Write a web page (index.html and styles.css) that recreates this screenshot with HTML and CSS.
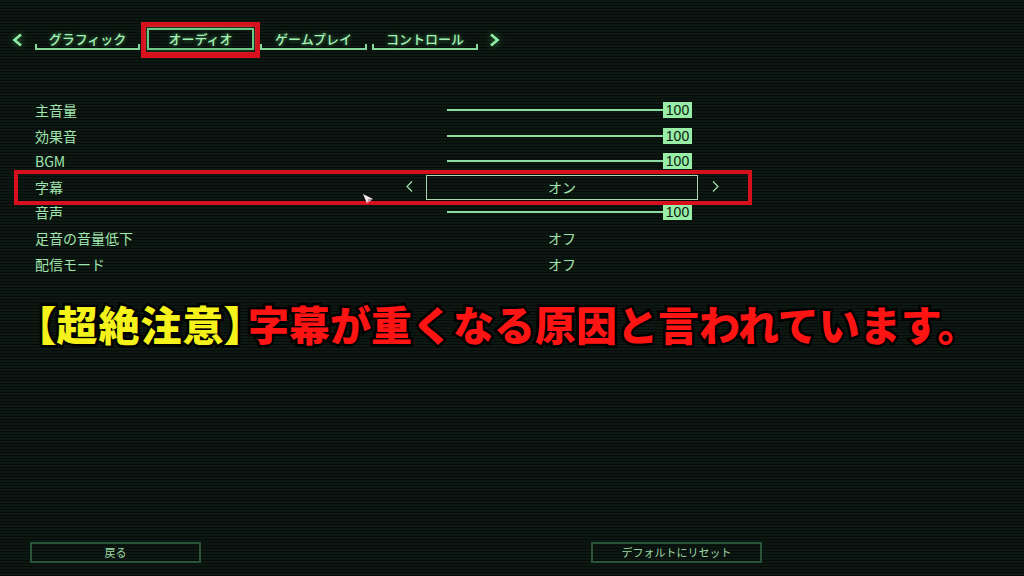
FILE: index.html
```html
<!DOCTYPE html>
<html lang="ja">
<head>
<meta charset="utf-8">
<title>オーディオ設定</title>
<link rel="stylesheet" href="styles.css">
</head>
<body>
<div class="screen">
  <nav class="tabs">
    <svg class="nav-arrow" width="11" height="14" viewBox="0 0 11 14"><polyline points="9,1.5 2.5,7 9,12.5" fill="none" stroke="#8ff0a4" stroke-width="2.6"/></svg>
    <div class="tab">グラフィック</div>
    <div class="tab-mark"><div class="tab-active">オーディオ</div></div>
    <div class="tab tab-3">ゲームプレイ</div>
    <div class="tab tab-4">コントロール</div>
    <svg class="nav-arrow nav-right" width="11" height="14" viewBox="0 0 11 14"><polyline points="2,1.5 8.5,7 2,12.5" fill="none" stroke="#8ff0a4" stroke-width="2.6"/></svg>
  </nav>

  <section class="settings">
    <div class="row"><span class="label">主音量</span><div class="slider"><span class="track"></span><span class="val">100</span></div></div>
    <div class="row"><span class="label">効果音</span><div class="slider"><span class="track"></span><span class="val">100</span></div></div>
    <div class="row"><span class="label">BGM</span><div class="slider"><span class="track"></span><span class="val">100</span></div></div>
    <div class="row marked">
      <span class="label">字幕</span>
      <svg class="larrow" width="7" height="11" viewBox="0 0 7 11"><polyline points="6,0.5 1,5.5 6,10.5" fill="none" stroke="#9fe3ae" stroke-width="1.2"/></svg>
      <div class="optbox">オン</div>
      <svg class="rarrow" width="7" height="11" viewBox="0 0 7 11"><polyline points="1,0.5 6,5.5 1,10.5" fill="none" stroke="#9fe3ae" stroke-width="1.2"/></svg>
    </div>
    <div class="row"><span class="label">音声</span><div class="slider"><span class="track"></span><span class="val">100</span></div></div>
    <div class="row"><span class="label">足音の音量低下</span><span class="value">オフ</span></div>
    <div class="row"><span class="label">配信モード</span><span class="value">オフ</span></div>
  </section>

  <p class="caption"><span class="warn">【超絶注意】</span><span class="alert">字幕が重くなる原因と言われています。</span></p>

  <footer class="buttons">
    <div class="btn">戻る</div>
    <div class="btn btn-reset">デフォルトにリセット</div>
  </footer>

  <svg class="cursor" width="11" height="10" viewBox="0 0 11 10"><polygon points="0,0 10,5 5.5,5.5 4,9.5" fill="#f2e6ea"/><polygon points="4,9.5 5.5,5.5 10,5" fill="#c9a9b4"/></svg>
</div>
</body>
</html>
```

FILE: styles.css
```css
html, body {
  margin: 0;
  padding: 0;
  background: #0a120e;
}

.screen {
  position: relative;
  width: 1024px;
  height: 576px;
  overflow: hidden;
  display: flex;
  flex-direction: column;
  font-family: "Noto Sans CJK JP", "Noto Sans", sans-serif;
  color: #a1e5ae;
  background: repeating-linear-gradient(to bottom, #0d1812 0px, #0d1812 2px, #060c09 2px, #060c09 3px);
}

/* Tabs */
.tabs {
  display: flex;
  align-items: center;
  padding: 21px 0 0 12px;
  height: 37px;
}

.nav-arrow {
  flex: none;
  margin-right: 12px;
  filter: drop-shadow(0 0 3px rgba(110, 255, 150, 0.5));
}

.nav-right {
  margin-right: 0;
  margin-left: 11px;
}

.tab {
  position: relative;
  box-sizing: border-box;
  width: 105px;
  height: 20px;
  margin-top: 1px;
  border-bottom: 2px solid #86d89a;
  font-size: 13px;
  font-weight: 500;
  line-height: 18px;
  text-align: center;
  color: #a6f2b4;
  text-shadow: 0 0 4px rgba(110, 255, 150, 0.55);
}

.tab::before,
.tab::after {
  content: "";
  position: absolute;
  bottom: -2px;
  width: 2px;
  height: 6px;
  background: #86d89a;
}

.tab::before { left: 0; }
.tab::after { right: 0; }

.tab-3 { width: 107px; margin-right: 5px; }
.tab-4 { width: 106px; }

.tab-mark {
  flex: none;
  margin-left: 1px;
  border: 5px solid #d8101e;
  border-bottom-width: 6px;
  padding: 1px 1px 2px 1px;
}

.tab-active {
  box-sizing: border-box;
  width: 107px;
  height: 22px;
  border: 2px solid #6fc886;
  font-size: 13px;
  font-weight: 500;
  line-height: 18px;
  text-align: center;
  color: #a6f2b4;
  text-shadow: 0 0 4px rgba(110, 255, 150, 0.55);
  box-shadow: 0 0 4px rgba(110, 255, 150, 0.35);
}

/* Settings */
.settings {
  margin-top: 39.2px;
  padding-left: 35px;
}

.row {
  display: grid;
  grid-template-columns: 368px 23px 272px 23px;
  width: 686px;
  height: 25.6px;
  align-items: center;
  font-size: 14px;
}

.label {
  grid-column: 1;
  line-height: 16px;
}

.slider {
  grid-column: 2 / 4;
  display: flex;
  align-items: center;
  margin-left: 44px;
  width: 245px;
}

.track {
  flex: 1;
  height: 2px;
  background: #8fdca0;
}

.val {
  flex: none;
  width: 29px;
  height: 16px;
  background: #98eea6;
  color: #0b1a10;
  font-family: "Liberation Sans", Arial, sans-serif;
  font-size: 14px;
  line-height: 16px;
  text-align: center;
}

.value {
  grid-column: 3;
  text-align: center;
}

.marked {
  position: relative;
}

.marked::after {
  content: "";
  position: absolute;
  left: -21px;
  right: -31px;
  top: -4px;
  bottom: -5.4px;
  border: 4px solid #d8101e;
}

.larrow {
  grid-column: 2;
  margin-left: 3px;
}

.rarrow {
  grid-column: 4;
  margin-left: 14px;
}

.optbox {
  grid-column: 3;
  box-sizing: border-box;
  height: 25px;
  margin-top: 1px;
  border: 1px solid #a9d6aa;
  line-height: 22px;
  text-align: center;
}

/* Caption */
.caption {
  margin: 20px 0 0 0;
  padding-left: 35px;
  height: 54px;
  font-family: "Noto Sans CJK JP", sans-serif;
  font-size: 41px;
  font-weight: 900;
  line-height: 54px;
  white-space: nowrap;
  -webkit-text-stroke: 5px #000;
  paint-order: stroke fill;
}

.warn {
  color: #f4f21a;
  font-feature-settings: "palt";
  letter-spacing: 1px;
}

.alert {
  color: #ff1414;
  margin-left: 2px;
}

/* Footer */
.buttons {
  margin-top: auto;
  display: flex;
  padding: 0 0 13px 30px;
}

.btn {
  box-sizing: border-box;
  width: 171px;
  height: 21px;
  border: 2px solid #2a5436;
  font-size: 11px;
  line-height: 17px;
  text-align: center;
  color: #9cd8a6;
}

.btn-reset {
  margin-left: 390px;
}

.cursor {
  position: absolute;
  left: 363px;
  top: 194px;
}
```
